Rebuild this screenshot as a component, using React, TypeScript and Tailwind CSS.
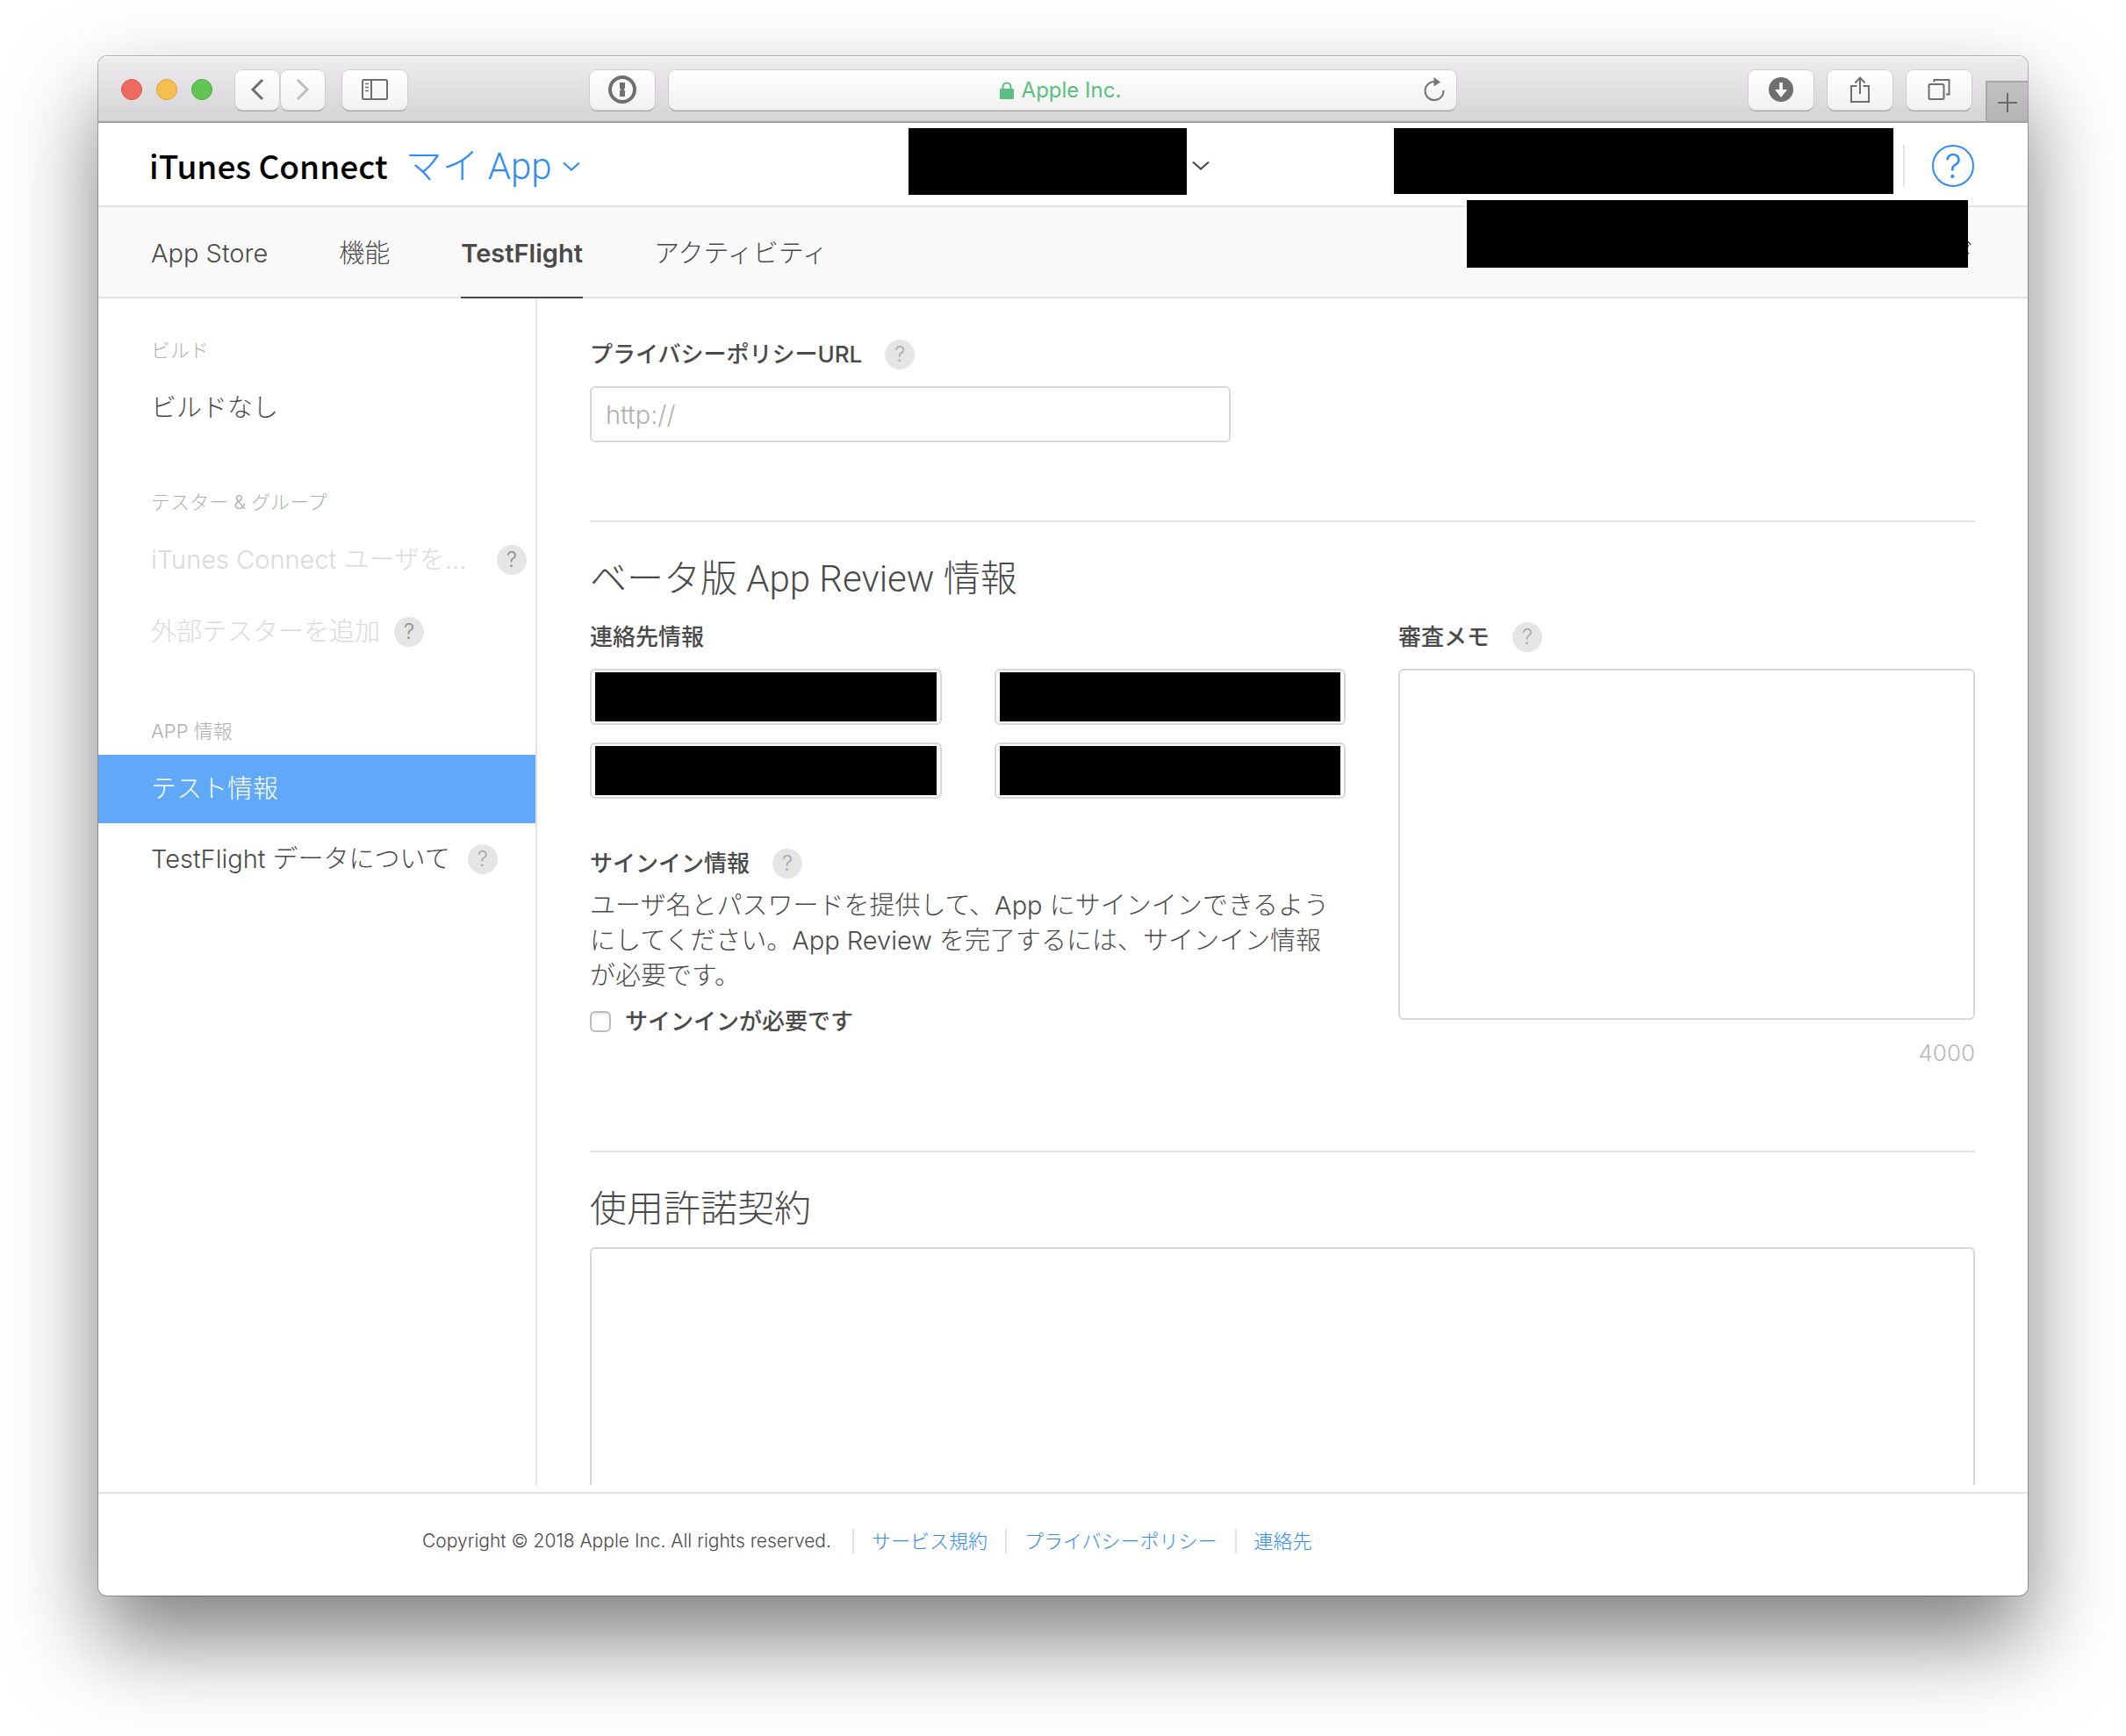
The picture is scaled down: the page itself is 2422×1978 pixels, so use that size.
import type { ReactNode } from "react";

function ToolbarButton({ label, className = "w-[74px]", children }: { label: string; className?: string; children: ReactNode }) {
  return (
    <button
      aria-label={label}
      className={`flex h-[45px] shrink-0 items-center justify-center rounded-lg bg-gradient-to-b from-white to-[#f1f1f1] text-[#6f6f6f] shadow-[0_0_0_1px_#d0ced1,0_2px_0_#a9a7aa] ${className}`}
    >
      {children}
    </button>
  );
}

function HelpBadge({ dark = false }: { dark?: boolean }) {
  return (
    <button
      aria-label="ヘルプ"
      className={`flex size-[34px] shrink-0 items-center justify-center rounded-full bg-[#e5e5e5] text-[24px] leading-none font-light ${dark ? "text-[#8c8c8c]" : "text-[#a6a6a6]"}`}
    >
      ?
    </button>
  );
}

function Chevron({ className = "" }: { className?: string }) {
  return (
    <svg viewBox="0 0 20 12" className={`h-3 w-5 shrink-0 ${className}`} fill="none" stroke="currentColor" strokeWidth="2.2">
      <path d="M1 1.5 10 9.5 19 1.5" />
    </svg>
  );
}

function RedactedField({ label }: { label: string }) {
  return (
    <div className="relative">
      <input aria-label={label} className="block h-16 w-full rounded-md border-2 border-[#d8d8d8] bg-white" />
      <div className="absolute inset-x-[6px] inset-y-[4px] bg-black" />
    </div>
  );
}

function Toolbar() {
  return (
    <div className="flex h-[76px] items-center border-b-2 border-[#a19fa3] bg-gradient-to-b from-[#eeecef] to-[#d5d3d6] pt-[2px] pl-[26px] shadow-[inset_0_2px_0_#f6f5f7]">
      <div className="flex gap-4">
        <span className="size-6 rounded-full border border-[#d9564b] bg-[#ee6a5f]" />
        <span className="size-6 rounded-full border border-[#dba13a] bg-[#f5bf4f]" />
        <span className="size-6 rounded-full border border-[#4fa840] bg-[#62c655]" />
      </div>
      <div className="ml-[26px] flex gap-[2px]">
        <ToolbarButton label="戻る" className="w-[50px]">
          <svg viewBox="0 0 16 26" className="h-[26px] w-4" fill="none" stroke="currentColor" strokeWidth="3">
            <path d="M14 2 3 13l11 11" />
          </svg>
        </ToolbarButton>
        <ToolbarButton label="進む" className="w-[50px]">
          <svg viewBox="0 0 16 26" className="h-[26px] w-4 text-[#bdbdbd]" fill="none" stroke="currentColor" strokeWidth="3">
            <path d="m2 2 11 11L2 24" />
          </svg>
        </ToolbarButton>
      </div>
      <ToolbarButton label="サイドバー" className="ml-5 w-[74px]">
        <svg viewBox="0 0 30 24" className="h-6 w-[30px]" fill="none" stroke="currentColor" strokeWidth="2">
          <rect x="1" y="1" width="28" height="22" rx="1.5" />
          <path d="M11 1v22" />
          <path d="M4 5.5h4M4 9.5h4M4 13.5h4" strokeWidth="1.6" />
        </svg>
      </ToolbarButton>
      <ToolbarButton label="1Password" className="ml-52 w-[74px]">
        <svg viewBox="0 0 32 32" className="size-8" fill="none" stroke="currentColor">
          <circle cx="16" cy="16" r="14" strokeWidth="4" />
          <path d="M13 8h6v6.500l-1.500 1.500L19 17.500V24h-6v-6.500l1.500-1.500L13 14.500z" fill="currentColor" stroke="none" />
        </svg>
      </ToolbarButton>
      <div className="mr-[333px] ml-4 flex h-[45px] flex-1 items-center rounded-lg bg-gradient-to-b from-white to-[#f1f1f1] pr-3 shadow-[0_0_0_1px_#d0ced1,0_2px_0_#a9a7aa]">
        <div className="flex flex-1 items-center justify-center gap-2 pt-[2px] pl-8 text-[#5bc07f]">
          <svg viewBox="0 0 18 20" className="h-5 w-[18px]" fill="currentColor">
            <rect x="1" y="8" width="16" height="12" rx="1" />
            <path d="M4.5 9V6a4.5 4.5 0 0 1 9 0v3" fill="none" stroke="currentColor" strokeWidth="2" />
          </svg>
          <span className="text-[24px] leading-8">Apple Inc.</span>
        </div>
        <button aria-label="再読み込み" className="text-[#767676]">
          <svg viewBox="0 0 26 28" className="h-7 w-[26px]" fill="none" stroke="currentColor" strokeWidth="2">
            <path d="M15 5.3A10.5 10.5 0 1 0 23.5 15" />
            <path d="M12.5 0v10.5L20 5.5z" fill="currentColor" stroke="none" />
          </svg>
        </button>
      </div>
      <div className="flex gap-4">
        <ToolbarButton label="ダウンロード">
          <svg viewBox="0 0 28 28" className="size-7">
            <circle cx="14" cy="14" r="14" fill="currentColor" />
            <path d="M12.2 6h3.600v8H21l-7 9-7-9h5.200z" fill="#fff" />
          </svg>
        </ToolbarButton>
        <ToolbarButton label="共有">
          <svg viewBox="0 0 24 32" className="h-8 w-6" fill="none" stroke="currentColor" strokeWidth="2">
            <path d="M8.5 12H2v18h20V12h-6.5" />
            <path d="M12 21V3M6.5 8.5 12 2.5l5.500 6" />
          </svg>
        </ToolbarButton>
        <ToolbarButton label="タブ一覧">
          <svg viewBox="0 0 26 26" className="size-[26px]" fill="none" stroke="currentColor" strokeWidth="2">
            <rect x="1.5" y="7" width="17" height="17" rx="1.5" />
            <path d="M7.5 4.500V2h17v16.500H21" />
          </svg>
        </ToolbarButton>
      </div>
      <button aria-label="新規タブ" className="ml-4 flex h-[46px] w-12 shrink-0 items-center justify-center self-end border-t-2 border-l-2 border-[#a9a7aa] bg-gradient-to-b from-[#c3c1c4] to-[#b5b3b6] pt-[2px] text-[#6a686b]">
        <svg viewBox="0 0 22 22" className="size-[22px]" fill="none" stroke="currentColor" strokeWidth="2">
          <path d="M11 0v22M0 11h22" />
        </svg>
      </button>
    </div>
  );
}

function Header() {
  return (
    <header className="relative grid h-24 grid-cols-[1fr_auto_1fr] items-center border-b-2 border-[#e3e3e3] pt-[3px] pr-[61px] pl-[58px]">
      <div className="flex items-baseline">
        <a href="#home" className="font-['Noto_Sans_CJK_JP',sans-serif] text-[37px] leading-[48px] font-medium text-black">
          iTunes Connect
        </a>
        <a href="#apps" className="ml-5 flex items-center gap-3 font-['Roboto','Noto_Sans_CJK_JP',sans-serif] text-[42px] leading-[48px] font-light text-[#2f8bf7]">
          マイ App
          <Chevron />
        </a>
      </div>
      <div className="flex items-center gap-[6px] self-stretch pr-[6px]">
        <div className="mt-[3px] h-[76px] w-[317px] self-start bg-black" />
        <Chevron className="text-[#4a4a4a]" />
      </div>
      <div className="flex items-center justify-end self-stretch">
        <div className="mt-[3px] h-[75px] w-[569px] self-start bg-black" />
        <div className="ml-[11px] h-12 w-[2px] bg-[#e3e3e3]" />
        <button aria-label="ヘルプ" className="ml-[31px] flex size-12 items-center justify-center rounded-full border-2 border-[#2f8bf7] text-[38px] leading-none font-light text-[#2f8bf7]">
          ?
        </button>
      </div>
      <div className="absolute top-[88px] right-[68px] z-10 h-[77px] w-[571px] bg-black">
        {/* tail of the covered status text */}
        <svg viewBox="0 0 4 16" className="absolute top-[47px] left-full h-4 w-1" fill="none" stroke="#4a4a4a" strokeWidth="1.5">
          <path d="M0 0 3 4M0 4v2M0 13.5h1.500" />
        </svg>
      </div>
    </header>
  );
}

function Tabs() {
  return (
    <nav className="flex h-[104px] gap-[81px] border-b-2 border-[#e3e3e3] bg-[#f9f9f9] pl-[60px] text-[29px] leading-[106px] font-light text-[#4a4a4a]">
      <a href="#store">App Store</a>
      <a href="#features">機能</a>
      <a href="#testflight" className="h-[104px] border-b-2 border-[#4a4a4a] font-semibold">
        TestFlight
      </a>
      <a href="#activity">アクティビティ</a>
    </nav>
  );
}

function SideHeading({ children }: { children: ReactNode }) {
  return <h3 className="mb-[13px] pl-[60px] text-[22px] leading-7 font-light text-[#b0b0b0]">{children}</h3>;
}

function Sidebar() {
  return (
    <aside className="w-[500px] shrink-0 border-r-2 border-[#e3e3e3] pt-[45px] text-[29px] leading-10 font-light text-[#4a4a4a]">
      <SideHeading>ビルド</SideHeading>
      <a href="#builds" className="flex h-[78px] items-center pl-[60px]">ビルドなし</a>

      <div className="mt-[54px]">
        <SideHeading>テスター &amp; グループ</SideHeading>
        <div className="flex h-[78px] items-center justify-between pr-[10px] pl-[60px] text-[#dadada]">
          <span>iTunes Connect ユーザを...</span>
          <HelpBadge dark />
        </div>
        <div className="mt-1 flex h-[78px] items-center gap-4 pl-[60px] text-[#dadada]">
          <span>外部テスターを追加</span>
          <HelpBadge dark />
        </div>
      </div>

      <div className="mt-[60px]">
        <SideHeading>APP 情報</SideHeading>
        <a href="#test-info" className="flex h-[78px] items-center bg-[#5fa9f8] pl-[60px] text-white">テスト情報</a>
        <div className="mt-[2px] flex h-[78px] items-center gap-5 pl-[60px]">
          <a href="#about">TestFlight データについて</a>
          <HelpBadge />
        </div>
      </div>
    </aside>
  );
}

function Content() {
  return (
    <main className="flex-1 px-[60px] text-[#4a4a4a]">
      <section className="border-b-2 border-[#e3e3e3] pt-[46px] pb-[89px]">
        <div className="flex items-center gap-[26px]">
          <label htmlFor="privacy" className="text-[26px] leading-9 font-medium">プライバシーポリシーURL</label>
          <HelpBadge />
        </div>
        <input
          id="privacy"
          placeholder="http://"
          className="mt-[18px] block h-16 w-[730px] rounded-md border-2 border-[#d8d8d8] bg-white px-4 text-[29px] font-light placeholder:text-[#b0b0b0]"
        />
      </section>

      <section className="border-b-2 border-[#e3e3e3] pt-[37px] pb-[93px]">
        <h2 className="font-['Roboto','Noto_Sans_CJK_JP',sans-serif] text-[42px] leading-[56px] font-light">ベータ版 App Review 情報</h2>
        <div className="mt-5 grid grid-cols-[861fr_657fr] gap-[60px]">
          <div>
            <h3 className="text-[26px] leading-9 font-medium">連絡先情報</h3>
            <div className="mt-[18px] grid grid-cols-2 gap-x-[60px] gap-y-5">
              <RedactedField label="名" />
              <RedactedField label="姓" />
              <RedactedField label="電話番号" />
              <RedactedField label="メール" />
            </div>
            <div className="mt-14 flex items-center gap-[26px]">
              <h3 className="text-[26px] leading-9 font-medium">サインイン情報</h3>
              <HelpBadge />
            </div>
            <p className="mt-[10px] text-[29px] leading-10 font-light">
              ユーザ名とパスワードを提供して、App にサインインできるようにしてください。App Review を完了するには、サインイン情報が必要です。
            </p>
            <label className="mt-[14px] flex items-center gap-4 text-[26px] leading-9 font-medium">
              <input type="checkbox" className="size-6 appearance-none rounded-md border-2 border-[#bcbcbc] bg-white shadow-[inset_0_2px_2px_#e8e8e8]" />
              サインインが必要です
            </label>
          </div>
          <div>
            <div className="flex items-center gap-[26px]">
              <label htmlFor="memo" className="text-[26px] leading-9 font-medium">審査メモ</label>
              <HelpBadge />
            </div>
            <textarea id="memo" className="mt-[18px] block h-[400px] w-full resize-none rounded-md border-2 border-[#d8d8d8] bg-white" />
            <p className="mt-5 text-right text-[26px] leading-9 font-light text-[#b8b8b8]">4000</p>
          </div>
        </div>
      </section>

      <section className="pt-9">
        <h2 className="text-[42px] leading-[56px] font-light">
          <label htmlFor="license">使用許諾契約</label>
        </h2>
        <textarea id="license" className="mt-4 block h-[271px] w-full resize-none rounded-t-md border-2 border-b-0 border-[#d8d8d8] bg-white" />
      </section>
    </main>
  );
}

function Footer() {
  return (
    <footer className="mt-2 flex items-center border-t-2 border-[#e3e3e3] pt-10 pb-12 pl-[369px] text-[22px] leading-7 font-light text-[#4a4a4a]">
      <span className="pr-6 text-[21px]">Copyright © 2018 Apple Inc. All rights reserved.</span>
      <a href="#terms" className="border-l-2 border-[#e3e3e3] px-5 text-[#2f8bf7]">サービス規約</a>
      <a href="#policy" className="border-l-2 border-[#e3e3e3] px-5 text-[#2f8bf7]">プライバシーポリシー</a>
      <a href="#contact" className="border-l-2 border-[#e3e3e3] px-5 text-[#2f8bf7]">連絡先</a>
    </footer>
  );
}

export default function App() {
  return (
    <div lang="ja" className="min-h-screen overflow-hidden bg-white px-28 pt-16 pb-40 font-['Inter','Noto_Sans_CJK_JP',sans-serif]">
      <div className="rounded-[10px] shadow-[0_0_0_1px_rgba(0,0,0,0.28),0_50px_100px_rgba(0,0,0,0.5)]">
        <div className="overflow-hidden rounded-[10px] bg-white">
          <Toolbar />
          <Header />
          <Tabs />
          <div className="flex">
            <Sidebar />
            <Content />
          </div>
          <Footer />
        </div>
      </div>
    </div>
  );
}
